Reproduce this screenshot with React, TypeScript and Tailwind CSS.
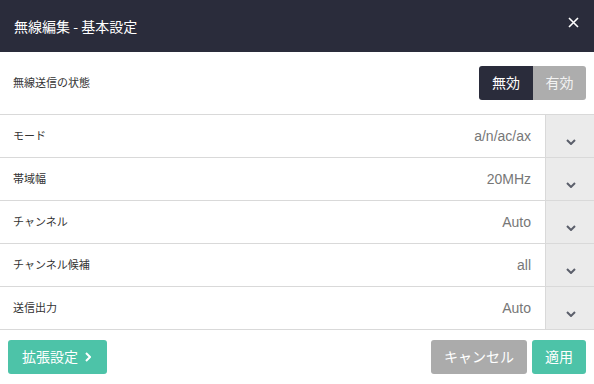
import React from 'react';

const rows = [
  { label: 'モード', value: 'a/n/ac/ax' },
  { label: '帯域幅', value: '20MHz' },
  { label: 'チャンネル', value: 'Auto' },
  { label: 'チャンネル候補', value: 'all' },
  { label: '送信出力', value: 'Auto' },
];

const Chevron = () => (
  <svg width="10" height="6" viewBox="0 0 10 6" fill="none">
    <path d="M1 1 L5 5 L9 1" stroke="#5b5f6b" strokeWidth="2" />
  </svg>
);

export default function App() {
  return (
    <div className="w-[594px] h-[384px] bg-white flex flex-col overflow-hidden font-['Liberation_Sans','Noto_Sans_CJK_JP',sans-serif]">
      {/* ヘッダー */}
      <div className="h-[52px] shrink-0 bg-[#2a2c3b] flex items-center justify-between pl-[14px] pr-[15px]">
        <div className="text-[14px] text-white font-['Noto_Sans_CJK_JP',sans-serif]">無線編集 - 基本設定</div>
        <svg width="11" height="11" viewBox="0 0 11 11" className="-mt-[7px]">
          <path d="M1 1 L10 10 M10 1 L1 10" stroke="#ffffff" strokeWidth="1.6" />
        </svg>
      </div>

      {/* 無線送信の状態 */}
      <div className="h-[63px] shrink-0 flex items-center justify-between pl-[13px] pr-[8px] border-b border-[#d9d9d9]">
        <div className="text-[11px] text-[#333]">無線送信の状態</div>
        <div className="flex h-[34px] rounded-[3px] overflow-hidden text-[14px]">
          <div className="w-[54px] bg-[#2a2c3b] text-white flex items-center justify-center">無効</div>
          <div className="w-[53px] bg-[#adadad] text-[#f2f2f2] flex items-center justify-center">有効</div>
        </div>
      </div>

      {/* 設定行 */}
      {rows.map((r) => (
        <div key={r.label} className="h-[43px] shrink-0 flex border-b border-[#d9d9d9]">
          <div className="flex-1 flex items-center justify-between pl-[13px] pr-[14px]">
            <div className="text-[11px] text-[#333]">{r.label}</div>
            <div className="text-[14px] text-[#777]">{r.value}</div>
          </div>
          <div className="w-[49px] bg-[#ebebeb] border-l border-[#d9d9d9] flex items-center justify-center pt-[11px] pl-[2px]">
            <Chevron />
          </div>
        </div>
      ))}

      {/* フッター */}
      <div className="flex-1 flex items-start justify-between pt-[10px] pl-[8px] pr-[8px]">
        <button className="w-[99px] h-[34px] rounded-[3px] bg-[#4dc3a8] text-white text-[14px] flex items-center justify-center gap-[7px] pr-[2px]">
          <span>拡張設定</span>
          <svg width="6" height="10" viewBox="0 0 6 10" fill="none">
            <path d="M1 1 L5 5 L1 9" stroke="#ffffff" strokeWidth="2" />
          </svg>
        </button>
        <div className="flex gap-[5px]">
          <button className="w-[96px] h-[34px] rounded-[3px] bg-[#ababab] text-white text-[14px] flex items-center justify-center">キャンセル</button>
          <button className="w-[54px] h-[34px] rounded-[3px] bg-[#4dc3a8] text-white text-[14px] flex items-center justify-center">適用</button>
        </div>
      </div>
    </div>
  );
}
